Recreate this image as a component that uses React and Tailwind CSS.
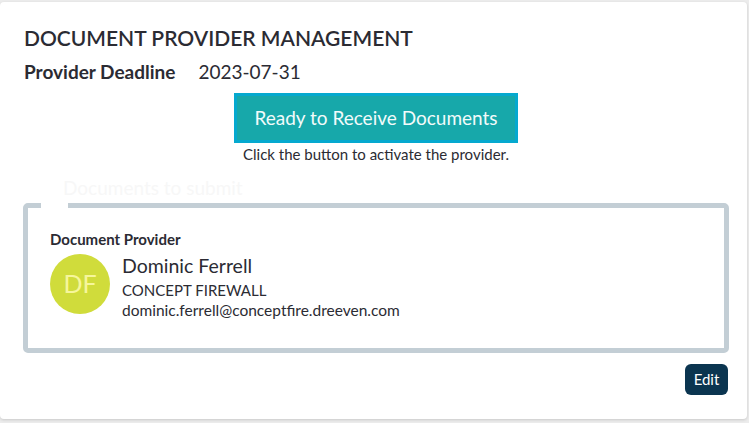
export default function App() {
  return (
    <div className="w-[749px] h-[423px] bg-[#ececec] pt-[2px] overflow-hidden" style={{ fontFamily: "Lato, 'Noto Sans', sans-serif" }}>
      <div className="w-[747px] h-[417px] bg-white rounded-[4px] shadow-[0_1px_3px_rgba(0,0,0,0.15)] pt-[23px] px-[24px] text-[#2b2b33]">
        <h1 className="text-[21px] leading-[26px] font-semibold">DOCUMENT PROVIDER MANAGEMENT</h1>
        <div className="flex items-baseline mt-[9px] text-[19px] leading-[24px]">
          <span className="font-bold">Provider Deadline</span>
          <span className="ml-[23px]">2023-07-31</span>
        </div>
        <div className="flex flex-col items-center mt-[9px]">
          <button className="ml-[5px] border-[3px] border-[#05a9cf] bg-[#17a8aa] text-[#f2fbfa] text-[19px] leading-[22px] w-[284px] h-[50px]">
            Ready to Receive Documents
          </button>
          <div className="ml-[5px] mt-[2px] text-[15px] leading-[19px]">Click the button to activate the provider.</div>
        </div>
        <div className="relative mt-[13px] ml-[39px] text-[19px] leading-[22px] text-[#f7f7f7]">Documents to submit</div>
        <div className="relative mt-[4px] ml-[-1px] w-[706px] h-[150px] border-[5px] border-[#c3ced5] rounded-[5px] pl-[22px] pt-[22px]">
          <div className="absolute top-[-5px] left-[13px] w-[27px] h-[5px] bg-white" />
          <div className="text-[15px] leading-[19px] font-bold">Document Provider</div>
          <div className="flex mt-[5px]">
            <div className="w-[60px] h-[60px] rounded-full bg-[#d0dc3b] flex items-center justify-center text-[25px] text-[#f6f69b]">DF</div>
            <div className="ml-[12px]">
              <div className="text-[19.5px] leading-[22px] mt-[1px]">Dominic Ferrell</div>
              <div className="text-[15px] leading-[19px] mt-[4px]">CONCEPT FIREWALL</div>
              <div className="text-[15.5px] leading-[20px]">dominic.ferrell@conceptfire.dreeven.com</div>
            </div>
          </div>
        </div>
        <div className="flex justify-end mt-[11px]">
          <button className="w-[43px] h-[31px] mr-[-5px] bg-[#0b3550] text-white text-[15px] rounded-[6px]">Edit</button>
        </div>
      </div>
    </div>
  );
}
